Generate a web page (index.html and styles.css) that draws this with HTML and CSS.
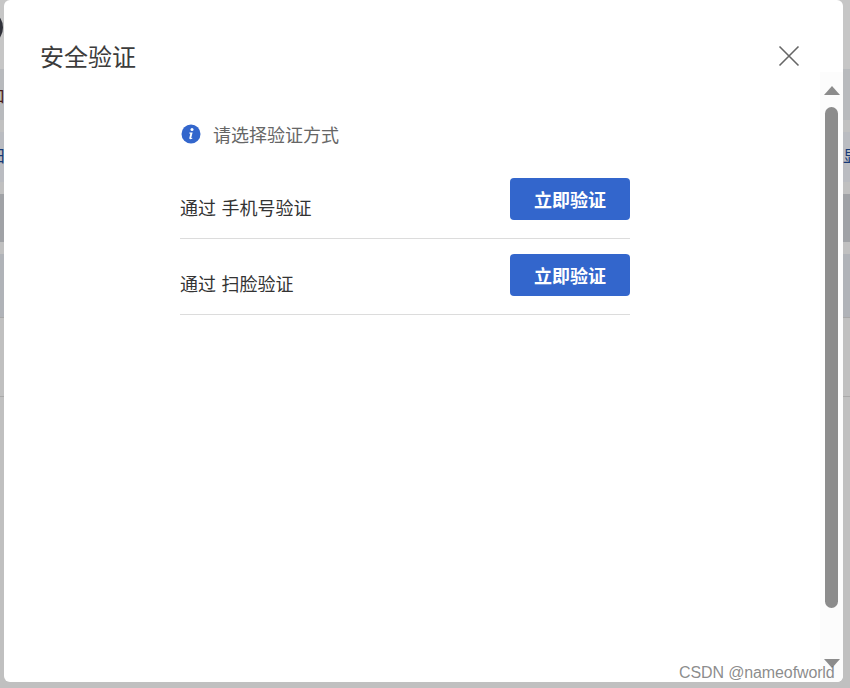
FILE: index.html
```html
<!DOCTYPE html>
<html lang="zh-CN">
<head>
<meta charset="utf-8">
<title>安全验证</title>
<link rel="stylesheet" href="styles.css">
</head>
<body>
<div class="backdrop">
  <div class="band b1"><span class="logo"></span></div>
  <div class="band b2"><span class="bg-text red">口</span></div>
  <div class="band b3"></div>
  <div class="band b4"><span class="bg-text blue">日</span><span class="bg-text blue right">显</span></div>
  <div class="band b5"></div>
  <div class="band b6"></div>
  <div class="band b7"></div>
  <div class="band b8"></div>
  <div class="band b9"></div>
</div>
<div class="modal">
  <header class="modal-head">
    <h1 class="title">安全验证</h1>
    <svg class="close" width="22" height="22" viewBox="0 0 22 22" aria-label="关闭"><path d="M1.5 1.5 20.5 20.5M20.5 1.5 1.5 20.5" stroke="#666" stroke-width="1.6" fill="none"/></svg>
  </header>
  <div class="modal-main">
    <div class="content">
      <div class="hint">
        <svg class="info" width="20" height="20" viewBox="0 0 20 20"><circle cx="10" cy="10" r="9.5" fill="#3366cc"/><circle cx="11" cy="5.6" r="1.5" fill="#fff"/><path d="M8.4 8.6h3.2l-1.3 5.1c-.1.4.3.5.9.1l.2.6c-1 .8-3.4 1.3-3.1-.4l1-4.2-1-.2z" fill="#fff"/></svg>
        <span>请选择验证方式</span>
      </div>
      <div class="option">
        <span class="label">通过 手机号验证</span>
        <button class="verify">立即验证</button>
      </div>
      <div class="option">
        <span class="label">通过 扫脸验证</span>
        <button class="verify">立即验证</button>
      </div>
    </div>
    <div class="scrollbar">
      <span class="arrow up"></span>
      <span class="thumb"></span>
      <span class="arrow down"></span>
    </div>
  </div>
</div>
<div class="watermark">CSDN @nameofworld</div>
</body>
</html>
```
FILE: styles.css
```css
* { box-sizing: border-box; }
html, body { margin: 0; height: 688px; overflow: hidden; }
body {
  position: relative;
  width: 850px;
  background: #c0c0c0;
  font-family: "Noto Sans CJK SC", "Liberation Sans", sans-serif;
}
.backdrop { display: flex; flex-direction: column; height: 688px; }
.band { position: relative; overflow: hidden; flex: none; }
.b1 { height: 69px; background: #c6c6c6; }
.b2 { height: 51px; background: #b8babd; }
.b3 { height: 12px; background: #c1c1c1; }
.b4 { height: 50px; background: #babcc1; }
.b5 { height: 12px; background: #c0c0c0; }
.b6 { height: 48px; background: #a0a2a6; }
.b7 { height: 12px; background: #c0c0c0; }
.b8 { height: 64px; background: #b0b3b8; border-bottom: 1px solid #a8a8a8; }
.b9 { height: 360px; background: #c0c0c0 linear-gradient(#a9a9a9, #a9a9a9) 0 78px / 100% 1px no-repeat; }
.logo { position: absolute; left: -13px; top: 15px; width: 16px; height: 25px; border-radius: 50%; background: #30323a; }
.bg-text { position: absolute; font-size: 16px; line-height: 20px; }
.red { color: #4a1a14; left: -11px; top: 16px; }
.blue { color: #163a78; top: 13px; left: -10px; }
.blue.right { left: 843px; }

.modal {
  position: absolute;
  left: 4px;
  top: 0;
  width: 839px;
  height: 682px;
  display: flex;
  flex-direction: column;
  background: #fff;
  border-radius: 6px;
  overflow: hidden;
}
.modal-head {
  flex: none;
  height: 72px;
  display: flex;
  align-items: flex-start;
  justify-content: space-between;
  padding: 41px 43px 0 36px;
}
.title { margin: -1px 0 0; font-size: 24px; line-height: 32px; font-weight: 400; color: #3c3c3c; }
.close { display: block; margin-top: 4px; }
.modal-main { flex: 1; display: flex; min-height: 0; }
.content { flex: 1; padding: 46px 0 0 176px; }
.hint { display: flex; align-items: center; gap: 12px; height: 32px; width: 450px; font-size: 18px; color: #666; margin-bottom: 13px; }
.info { flex: none; margin-left: 1px; }
.option {
  width: 450px;
  height: 76px;
  display: flex;
  justify-content: space-between;
  align-items: flex-start;
  padding-top: 15px;
  border-bottom: 1px solid #dcdcdc;
}
.label { font-size: 18px; line-height: 26px; color: #333; margin-top: 16px; word-spacing: 1.5px; }
.verify {
  width: 120px;
  height: 42px;
  border: 0;
  border-radius: 4px;
  background: #3366cc;
  color: #fff;
  font: 700 18px/40px "Noto Sans CJK SC", "Liberation Sans", sans-serif;
  padding: 0;
}
.scrollbar {
  flex: none;
  width: 23px;
  display: flex;
  flex-direction: column;
  align-items: center;
  background: #fcfcfc;
  padding-top: 14px;
}
.thumb { width: 13px; height: 501px; margin: 12px 0 51px; border-radius: 7px; background: #8c8c8c; }
.arrow { width: 0; height: 0; border-left: 8px solid transparent; border-right: 8px solid transparent; }
.arrow.up { border-bottom: 9px solid #8c8c8c; }
.arrow.down { border-top: 9px solid #8c8c8c; }
.watermark {
  position: absolute;
  left: 679px;
  top: 664px;
  font: 16px/18px "Liberation Sans", sans-serif;
  letter-spacing: -0.12px;
  color: rgba(110, 110, 110, 0.8);
}
```
